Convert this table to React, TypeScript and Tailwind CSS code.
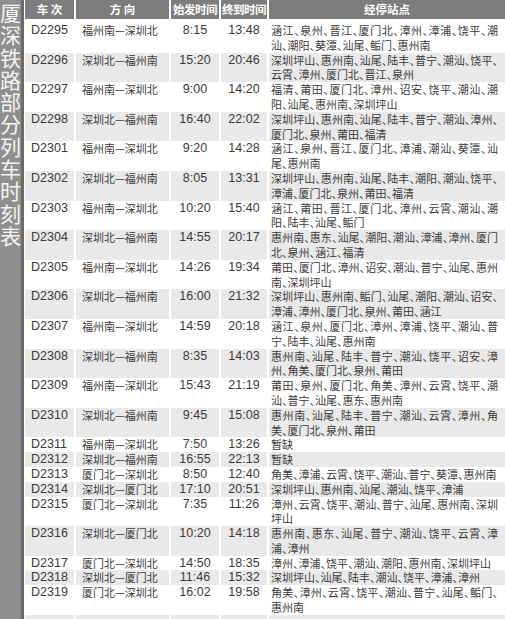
import React from 'react';

type Train = {
  code: string;
  dir: string;
  dep: string;
  arr: string;
  stops: string[];
};

const trains: Train[] = [
  { code: 'D2295', dir: '福州南—深圳北', dep: '8:15', arr: '13:48', stops: ['涵江、泉州、晋江、厦门北、漳州、漳浦、饶平、潮', '汕、潮阳、葵潭、汕尾、鲘门、惠州南'] },
  { code: 'D2296', dir: '深圳北—福州南', dep: '15:20', arr: '20:46', stops: ['深圳坪山、惠州南、汕尾、陆丰、普宁、潮汕、饶平、', '云霄、漳州、厦门北、晋江、泉州'] },
  { code: 'D2297', dir: '福州南—深圳北', dep: '9:00', arr: '14:20', stops: ['福清、莆田、厦门北、漳州、诏安、饶平、潮汕、潮', '阳、汕尾、惠州南、深圳坪山'] },
  { code: 'D2298', dir: '深圳北—福州南', dep: '16:40', arr: '22:02', stops: ['深圳坪山、惠州南、汕尾、陆丰、普宁、潮汕、漳州、', '厦门北、泉州、莆田、福清'] },
  { code: 'D2301', dir: '福州南—深圳北', dep: '9:20', arr: '14:28', stops: ['涵江、泉州、晋江、厦门北、漳浦、潮汕、葵潭、汕', '尾、惠州南'] },
  { code: 'D2302', dir: '深圳北—福州南', dep: '8:05', arr: '13:31', stops: ['深圳坪山、惠州南、汕尾、陆丰、潮阳、潮汕、饶平、', '漳浦、厦门北、泉州、莆田、福清'] },
  { code: 'D2303', dir: '福州南—深圳北', dep: '10:20', arr: '15:40', stops: ['涵江、莆田、晋江、厦门北、漳州、云霄、潮汕、潮', '阳、陆丰、汕尾、鲘门'] },
  { code: 'D2304', dir: '深圳北—福州南', dep: '14:55', arr: '20:17', stops: ['惠州南、惠东、汕尾、潮阳、潮汕、漳浦、漳州、厦门', '北、泉州、涵江、福清'] },
  { code: 'D2305', dir: '福州南—深圳北', dep: '14:26', arr: '19:34', stops: ['莆田、厦门北、漳州、诏安、潮汕、普宁、汕尾、惠州', '南、深圳坪山'] },
  { code: 'D2306', dir: '深圳北—福州南', dep: '16:00', arr: '21:32', stops: ['深圳坪山、惠州南、鲘门、汕尾、潮阳、潮汕、诏安、', '漳浦、漳州、厦门北、泉州、莆田、涵江'] },
  { code: 'D2307', dir: '福州南—深圳北', dep: '14:59', arr: '20:18', stops: ['涵江、泉州、厦门北、漳州、漳浦、饶平、潮汕、普', '宁、陆丰、汕尾、惠州南'] },
  { code: 'D2308', dir: '深圳北—福州南', dep: '8:35', arr: '14:03', stops: ['惠州南、汕尾、陆丰、普宁、潮汕、饶平、诏安、漳', '州、角美、厦门北、泉州、莆田'] },
  { code: 'D2309', dir: '福州南—深圳北', dep: '15:43', arr: '21:19', stops: ['莆田、泉州、厦门北、角美、漳州、云霄、饶平、潮', '汕、普宁、汕尾、惠东、惠州南'] },
  { code: 'D2310', dir: '深圳北—福州南', dep: '9:45', arr: '15:08', stops: ['惠州南、汕尾、陆丰、普宁、潮汕、云霄、漳州、角', '美、厦门北、泉州、莆田'] },
  { code: 'D2311', dir: '福州南—深圳北', dep: '7:50', arr: '13:26', stops: ['暂缺'] },
  { code: 'D2312', dir: '深圳北—福州南', dep: '16:55', arr: '22:13', stops: ['暂缺'] },
  { code: 'D2313', dir: '厦门北—深圳北', dep: '8:50', arr: '12:40', stops: ['角美、漳浦、云霄、饶平、潮汕、普宁、葵潭、惠州南'] },
  { code: 'D2314', dir: '深圳北—厦门北', dep: '17:10', arr: '20:51', stops: ['深圳坪山、惠州南、汕尾、潮汕、饶平、漳浦'] },
  { code: 'D2315', dir: '厦门北—深圳北', dep: '7:35', arr: '11:26', stops: ['漳州、云霄、饶平、潮汕、普宁、汕尾、惠州南、深圳', '坪山'] },
  { code: 'D2316', dir: '深圳北—厦门北', dep: '10:20', arr: '14:18', stops: ['惠州南、惠东、汕尾、普宁、潮汕、饶平、云霄、漳', '浦、漳州'] },
  { code: 'D2317', dir: '厦门北—深圳北', dep: '14:50', arr: '18:35', stops: ['漳州、漳浦、饶平、潮汕、潮阳、惠州南、深圳坪山'] },
  { code: 'D2318', dir: '深圳北—厦门北', dep: '11:46', arr: '15:32', stops: ['深圳坪山、汕尾、陆丰、潮汕、饶平、漳浦、漳州'] },
  { code: 'D2319', dir: '厦门北—深圳北', dep: '16:02', arr: '19:58', stops: ['角美、漳州、云霄、饶平、潮汕、普宁、汕尾、鲘门、', '惠州南'] },
  { code: '', dir: '', dep: '', arr: '', stops: [''] },
];

const title = '厦深铁路部分列车时刻表';

const latin = "font-['Liberation_Sans','Noto_Sans_CJK_SC',sans-serif] text-[12.5px]";
const cjk = "font-['Noto_Sans_CJK_SC',sans-serif] text-[11px] [font-feature-settings:'halt']";

const TrainRow: React.FC<{ train: Train; shaded: boolean }> = ({ train, shaded }) => {
  const cell = shaded ? 'bg-[#e9e9e9]' : 'bg-white';
  return (
    <div className="grid grid-cols-[49px_93px_48px_46px_1fr] gap-x-[2px] leading-[14.8px] text-[#3a3a3a]">
      <div className={`${cell} ${latin} pl-[6px]`}>{train.code}</div>
      <div className={`${cell} ${cjk} pl-[6px] whitespace-nowrap`}>{train.dir}</div>
      <div className={`${cell} ${latin} text-center`}>{train.dep}</div>
      <div className={`${cell} ${latin} text-center`}>{train.arr}</div>
      <div className={`${cell} ${cjk} pl-[2px] pr-[7px]`}>
        {train.stops.map((line, i) => (
          <div
            key={i}
            className={
              i < train.stops.length - 1
                ? 'whitespace-nowrap text-justify [text-align-last:justify] h-[14.8px]'
                : 'whitespace-nowrap h-[14.8px]'
            }
          >
            {line}
          </div>
        ))}
      </div>
    </div>
  );
};

const App: React.FC = () => {
  return (
    <div className="flex h-[619px] w-[505px] overflow-hidden bg-white">
      {/* Side title */}
      <div className="flex w-[21px] flex-shrink-0 flex-col items-center bg-[#8f8f8f] pt-[1px] font-['Noto_Sans_CJK_SC',sans-serif] text-[21px] leading-[22.3px] text-[#f4f4f4]">
        {title.split('').map((c, i) => (
          <span key={i}>{c}</span>
        ))}
      </div>
      <div className="w-[3px] flex-shrink-0 bg-[#6a6a6a]" />
      <div className="w-[1px] flex-shrink-0 bg-white" />

      {/* Timetable */}
      <div className="flex-1">
        <div className="grid h-[19px] grid-cols-[49px_93px_48px_46px_1fr] gap-x-[2px] font-['Noto_Sans_CJK_SC',sans-serif] text-[11.5px] font-bold leading-[19px] text-white">
          <div className="bg-[#7d7d7d] text-center">车 次</div>
          <div className="bg-[#7d7d7d] text-center">方 向</div>
          <div className="bg-[#7d7d7d] text-center tracking-[-0.5px] whitespace-nowrap">始发时间</div>
          <div className="bg-[#7d7d7d] text-center tracking-[-0.5px] whitespace-nowrap">终到时间</div>
          <div className="bg-[#7d7d7d] text-center">经停站点</div>
        </div>
        <div className="mt-[4px]">
          {trains.map((t, i) => (
            <TrainRow key={i} train={t} shaded={i % 2 === 1} />
          ))}
        </div>
      </div>
    </div>
  );
};

export default App;
